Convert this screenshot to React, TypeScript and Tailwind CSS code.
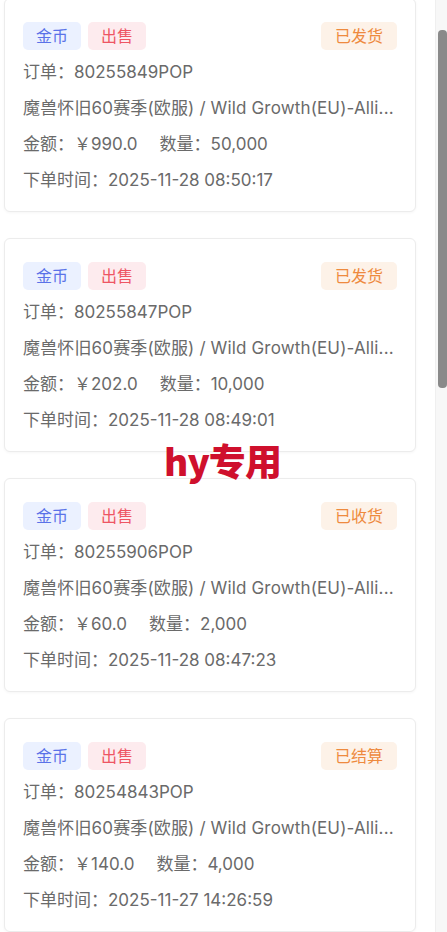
import React from 'react';

interface Order {
  id: string;
  amount: string;
  qty: string;
  time: string;
  status: string;
}

const ORDERS: Order[] = [
  { id: '80255849POP', amount: '990.0', qty: '50,000', time: '2025-11-28 08:50:17', status: '已发货' },
  { id: '80255847POP', amount: '202.0', qty: '10,000', time: '2025-11-28 08:49:01', status: '已发货' },
  { id: '80255906POP', amount: '60.0', qty: '2,000', time: '2025-11-28 08:47:23', status: '已收货' },
  { id: '80254843POP', amount: '140.0', qty: '4,000', time: '2025-11-27 14:26:59', status: '已结算' },
];

const OrderCard: React.FC<{ order: Order }> = ({ order }) => (
  <div className="bg-white border border-[#ececec] rounded-md shadow-[0_1px_3px_rgba(0,0,0,0.04)] pl-[18px] pr-[18px] pt-[23px] pb-[13px]">
    {/* Tags */}
    <div className="flex items-center justify-between h-[28px]">
      <div className="flex items-center gap-[7px]">
        <span className="h-[28px] leading-[28px] px-[13px] rounded-[5px] bg-[#ebf1ff] text-[#5a72e8] text-[16px]">金币</span>
        <span className="h-[28px] leading-[28px] px-[13px] rounded-[5px] bg-[#fdebee] text-[#ee5563] text-[16px]">出售</span>
      </div>
      <span className="h-[28px] leading-[28px] px-[14px] rounded-[5px] bg-[#fdf2e8] text-[#ee8a3e] text-[16px]">{order.status}</span>
    </div>

    {/* Details */}
    <div className="mt-[4px] text-[17px] text-[#6a6a6a] leading-[36px] [text-spacing-trim:space-all]">
      <div className="whitespace-nowrap">订单：{order.id}</div>
      <div className="whitespace-nowrap tracking-[0.15px]">魔兽怀旧60赛季(欧服) / Wild Growth(EU)-Alli...</div>
      <div className="whitespace-nowrap">
        <span>金额：￥{order.amount}</span>
        <span className="ml-[22px]">数量：{order.qty}</span>
      </div>
      <div className="whitespace-nowrap">下单时间：{order.time}</div>
    </div>
  </div>
);

export default function App() {
  return (
    <div
      className="relative w-[447px] h-[932px] overflow-hidden bg-white flex"
      style={{ fontFamily: 'Inter, "Noto Sans CJK SC", sans-serif' }}
    >
      {/* Order list */}
      <div className="w-[412px] ml-[4px] -mt-[2px] flex flex-col gap-[26px]">
        {ORDERS.map(o => (
          <OrderCard key={o.id} order={o} />
        ))}
      </div>

      {/* Scrollbar */}
      <div className="ml-[19px] w-[12px] h-full bg-[#f7f7f7] border-l border-[#efefef]">
        <div className="mt-[30px] ml-[2px] w-[9px] h-[358px] rounded-[4px] bg-[#8a8a8a]"></div>
      </div>

      {/* Watermark */}
      <div
        className="absolute left-[164px] top-[442px] text-[37px] font-black text-[#cf102d] leading-none tracking-tight"
        style={{ fontFamily: '"Noto Sans CJK SC", sans-serif' }}
      >
        hy专用
      </div>
    </div>
  );
}
